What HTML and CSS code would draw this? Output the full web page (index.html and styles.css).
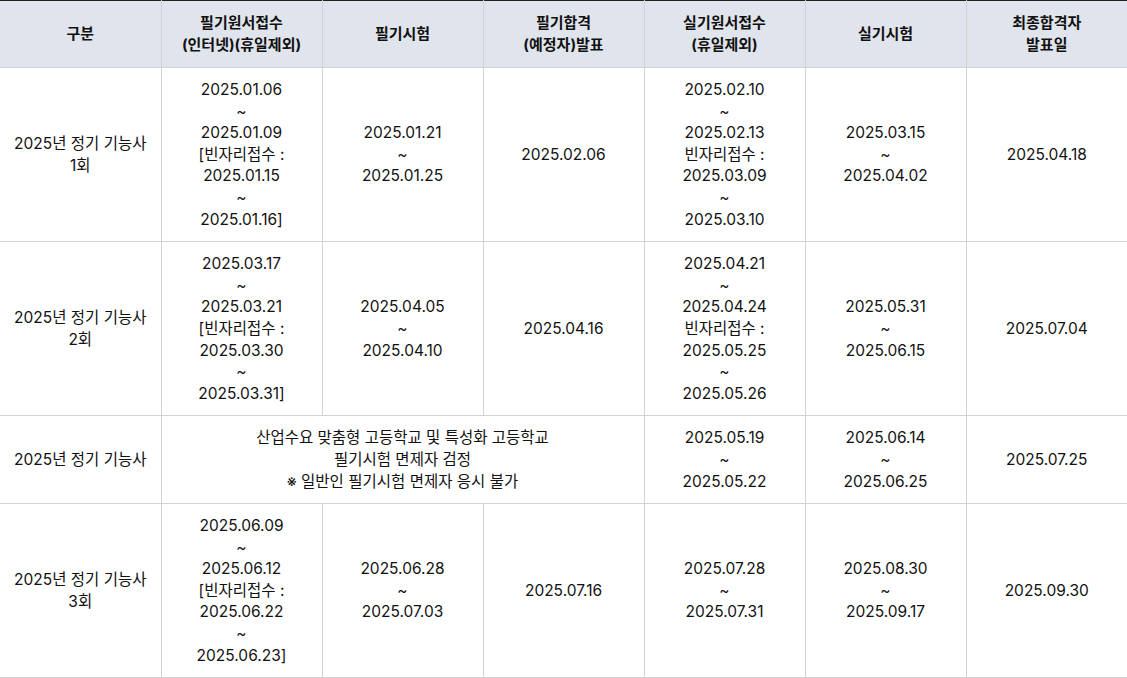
FILE: index.html
```html
<!DOCTYPE html>
<html lang="ko">
<head>
<meta charset="utf-8">
<link rel="stylesheet" href="styles.css">
</head>
<body>
<table class="sched">
  <thead>
    <tr>
      <th>구분</th>
      <th>필기원서접수<br>(인터넷)(휴일제외)</th>
      <th>필기시험</th>
      <th>필기합격<br>(예정자)발표</th>
      <th>실기원서접수<br>(휴일제외)</th>
      <th>실기시험</th>
      <th>최종합격자<br>발표일</th>
    </tr>
  </thead>
  <tbody>
    <tr class="r7">
      <td>2025년 정기 기능사<br>1회</td>
      <td>2025.01.06<br>~<br>2025.01.09<br>[빈자리접수 :<br>2025.01.15<br>~<br>2025.01.16]</td>
      <td>2025.01.21<br>~<br>2025.01.25</td>
      <td>2025.02.06</td>
      <td>2025.02.10<br>~<br>2025.02.13<br>빈자리접수 :<br>2025.03.09<br>~<br>2025.03.10</td>
      <td>2025.03.15<br>~<br>2025.04.02</td>
      <td>2025.04.18</td>
    </tr>
    <tr class="r7">
      <td>2025년 정기 기능사<br>2회</td>
      <td>2025.03.17<br>~<br>2025.03.21<br>[빈자리접수 :<br>2025.03.30<br>~<br>2025.03.31]</td>
      <td>2025.04.05<br>~<br>2025.04.10</td>
      <td>2025.04.16</td>
      <td>2025.04.21<br>~<br>2025.04.24<br>빈자리접수 :<br>2025.05.25<br>~<br>2025.05.26</td>
      <td>2025.05.31<br>~<br>2025.06.15</td>
      <td>2025.07.04</td>
    </tr>
    <tr>
      <td>2025년 정기 기능사</td>
      <td colspan="3">산업수요 맞춤형 고등학교 및 특성화 고등학교<br>필기시험 면제자 검정<br>※ 일반인 필기시험 면제자 응시 불가</td>
      <td>2025.05.19<br>~<br>2025.05.22</td>
      <td>2025.06.14<br>~<br>2025.06.25</td>
      <td>2025.07.25</td>
    </tr>
    <tr class="r7">
      <td>2025년 정기 기능사<br>3회</td>
      <td>2025.06.09<br>~<br>2025.06.12<br>[빈자리접수 :<br>2025.06.22<br>~<br>2025.06.23]</td>
      <td>2025.06.28<br>~<br>2025.07.03</td>
      <td>2025.07.16</td>
      <td>2025.07.28<br>~<br>2025.07.31</td>
      <td>2025.08.30<br>~<br>2025.09.17</td>
      <td>2025.09.30</td>
    </tr>
  </tbody>
</table>
</body>
</html>
```
FILE: styles.css
```css
html, body {
  margin: 0;
  padding: 0;
  background: #fff;
}
body {
  font-family: Inter, "Noto Sans CJK KR", sans-serif;
  color: #111;
  font-size: 15.5px;
}
.sched {
  width: 1127px;
  table-layout: fixed;
  border-collapse: collapse;
  border-top: 1px solid #222;
}
.sched th,
.sched td {
  text-align: center;
  vertical-align: middle;
  border: 1px solid #d3d3d3;
  padding: 11px 6px;
  line-height: 21.6px;
  font-size: 15.5px;
}
.sched tr > :first-child { border-left: none; }
.sched tr > :last-child { border-right: none; }
.sched thead th {
  background: #e0e4ec;
  font-weight: 700;
  font-size: 15px;
  height: 44px;
  padding: 11px 6px;
  line-height: 22px;
  border-top: 1px solid #222;
}
```
